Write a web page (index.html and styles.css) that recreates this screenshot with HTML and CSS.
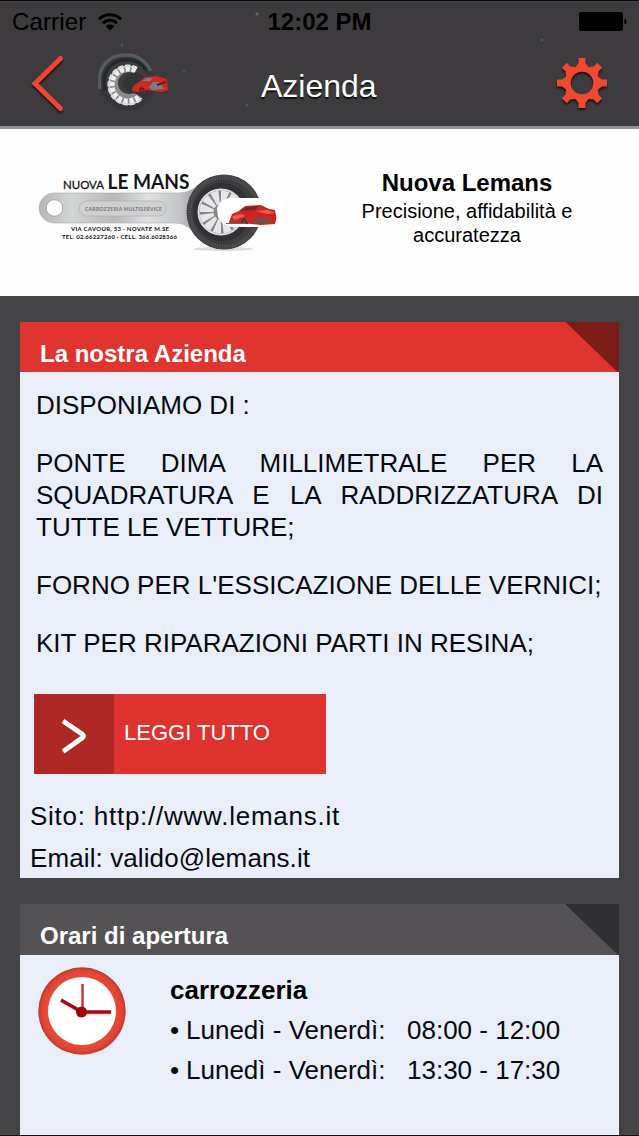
FILE: index.html
```html
<!DOCTYPE html>
<html lang="it">

<head>
  <meta charset="UTF-8">
  <meta name="viewport" content="width=device-width, initial-scale=1.0">
  <title>Azienda</title>
  <link rel="stylesheet" href="styles.css">
</head>

<body>
  <header>
    <div class="status">
      <span class="carrier">Carrier
        <svg width="26" height="20" viewBox="0 0 26 20" fill="none" stroke="#000" stroke-width="3">
          <path d="M2 7.2C8 1.3 18 1.3 24 7.2M6 11.3c4-4 10-4 14 0" />
          <path d="M8.5 14.2c2.700-2.400 6.300-2.400 9 0L13 18.500z" fill="#000" stroke="none" />
        </svg>
      </span>
      <b>12:02 PM</b>
      <svg class="battery" width="48" height="20" viewBox="0 0 48 20">
        <rect width="44" height="19" rx="2.500" />
        <path d="M45.500 6.500q2 .5 2 3t-2 3z" />
      </svg>
    </div>
    <nav>
      <svg class="back" width="36" height="60" viewBox="0 0 36 60" fill="none" stroke="#f2452f" stroke-width="5" stroke-linecap="round" stroke-linejoin="miter">
        <path d="M30.500 4.500 5 29.500l25.500 25" />
      </svg>
      <svg class="wheel" width="74" height="62" viewBox="0 0 74 62">
        <circle cx="29" cy="31" r="25" fill="none" stroke="#34373a" stroke-width="7" />
        <path d="M2 38C-2 15 12 3 29 4c12 0 19 7 24 16" fill="none" stroke="#555b5e" stroke-width="3.500" />
        <path d="M7 40C3 19 14 9 29 9c9 0 15 4 19 10" fill="none" stroke="#25282b" stroke-width="3" />
        <path d="M38 17.500A19 19 0 1 0 44 47l-6-6.500A11 11 0 1 1 37 23z" fill="#898b8d" />
        <path d="M38 19A17 17 0 1 0 42 46" fill="none" stroke="#efefef" stroke-width="7" stroke-dasharray="4.500 1.800" />
        <path d="M39 17.500A19 19 0 1 0 44 47" fill="none" stroke="#d4d5d5" stroke-width="1.500" />
        <path d="M29 24l9-3 8 5v22l-8-5-10-3-4-8z" fill="#343436" />
        <path d="M34 40l1-5 6-4 6-5 11-1 11 3 1 11-6 2-16-2-8 2z" fill="#cd2a24" />
        <path d="M44 30l5-3 6 0-3 3zM51 36l4-5 6 0 5 7-12 1z" fill="#777d89" />
        <path d="M42 40q1-5 4-1M59 34l9-3" stroke="#6d181a" stroke-width="2" fill="none" />
      </svg>
      <h1>Azienda</h1>
      <svg class="gear" width="52" height="52" viewBox="-26 -26 52 52" fill="#f0492f">
        <circle r="14.300" fill="none" stroke="#f0492f" stroke-width="6" />
        <g id="teeth">
          <path id="tooth" d="M-3.500-25h7v5l3 4h-13l3-4z" />
          <use href="#tooth" transform="rotate(45)" />
          <use href="#tooth" transform="rotate(90)" />
          <use href="#tooth" transform="rotate(135)" />
        </g>
        <use href="#teeth" transform="rotate(180)" />
      </svg>
    </nav>
  </header>

  <section class="intro">
    <svg class="logo" width="244" height="86" viewBox="38 168 244 86">
      <defs>
        <linearGradient id="steel">
          <stop offset="0" stop-color="#b5b6b8" />
          <stop offset=".2" stop-color="#d4d5d6" />
          <stop offset=".45" stop-color="#b5b7b9" />
          <stop offset=".65" stop-color="#dfe0e1" />
          <stop offset=".85" stop-color="#c2c3c5" />
          <stop offset="1" stop-color="#85878a" />
        </linearGradient>
      </defs>
      <ellipse cx="223" cy="249" rx="30" ry="2" fill="#ddd" />
      <path d="M54 193H178q12 0 20-8l8-3v58l-10-4q-8-13-20-13H54a14.500 14.500 0 0 1 0-30z" fill="url(#steel)" stroke="#b0b1b3" stroke-width=".7" />
      <circle cx="54.500" cy="208" r="8.300" fill="#fff" stroke="#999" stroke-width=".8" />
      <rect x="79" y="201" width="87" height="15" rx="7.500" fill="#cfd0d2" stroke="#aaa" stroke-width=".6" />
      <circle cx="224" cy="212" r="37.500" fill="#3c3d3f" />
      <circle cx="224" cy="212" r="34.500" fill="none" stroke="#515255" stroke-width="4" stroke-dasharray="1.500 1" />
      <circle cx="222" cy="212" r="29" fill="#303134" />
      <circle cx="221" cy="212" r="22.500" fill="#85878a" stroke="#dddddf" stroke-width="2" />
      <circle cx="221" cy="212" r="14.500" fill="none" stroke="#e6e6e8" stroke-width="14" stroke-dasharray="6 2" pathLength="96" />
      <path d="M221 201l8-3h53v29h-52l-8-4-4-6-1-9z" fill="#fff" />
      <path d="M229 222l3-8 7-3 6-5 16-1 8 4 6 1 1.500 8-1.500 6-14 1-20-2-12 1z" fill="#c9261f" />
      <path d="M239 211l8-4 12-1-4 4z" fill="#802326" />
      <path d="M232 216l9-2 5 2-12 4zM256 211l12-1 7 3-8 1z" fill="#ea6050" />
      <path d="M242 223q2-8 5 1" stroke="#35383c" stroke-width="2" fill="none" />
      <path d="M252 220l8-2 8 1 4 3-6 1h-14z" fill="#6b5157" />
      <path d="M226 223.500h20" stroke="#68696c" />
      <g class="logo-text">
        <text x="63" y="189.300" font-size="11.500" textLength="41" lengthAdjust="spacingAndGlyphs" class="light">NUOVA</text>
        <text x="107.500" y="189.300" font-size="21.500" font-weight="bold" textLength="82" lengthAdjust="spacingAndGlyphs">LE MANS</text>
        <text x="85" y="210.500" font-size="5" font-weight="bold" textLength="77" class="dim">CARROZZERIA MULTISERVICE</text>
        <text x="71" y="231.300" font-size="6" font-weight="bold" textLength="98">VIA CAVOUR, 53 · NOVATE M.SE</text>
        <text x="62" y="238.800" font-size="6" font-weight="bold" textLength="115">TEL. 02.66227260 · CELL. 366.6028366</text>
      </g>
    </svg>
    <div class="slogan">
      <h2>Nuova Lemans</h2>
      <p>Precisione, affidabilità e accuratezza</p>
    </div>
  </section>

  <main>
    <section class="card company">
      <h3>La nostra Azienda</h3>
      <div class="description">
        <p>DISPONIAMO DI :</p>
        <p class="justified">PONTE DIMA MILLIMETRALE PER LA SQUADRATURA E LA RADDRIZZATURA DI TUTTE LE VETTURE;</p>
        <p>FORNO PER L'ESSICAZIONE DELLE VERNICI;</p>
        <p>KIT PER RIPARAZIONI PARTI IN RESINA;</p>
      </div>
      <a class="more">
        <span class="more-icon">
          <svg width="26" height="38" viewBox="0 0 26 38" fill="none" stroke="#fff" stroke-width="5">
            <path d="M1 4 20 17q3 2 0 4L1 34.500" />
          </svg>
        </span>
        <span class="more-label">LEGGI TUTTO</span>
      </a>
      <p class="contact site">Sito: http://www.lemans.it</p>
      <p class="contact email">Email: valido@lemans.it</p>
    </section>

    <section class="card hours">
      <h3>Orari di apertura</h3>
      <div class="hours-body">
        <svg class="clock" width="88" height="88" viewBox="0 0 88 88">
          <defs>
            <radialGradient id="rim">
              <stop offset=".77" stop-color="#e94b39" />
              <stop offset=".92" stop-color="#df4434" />
              <stop offset="1" stop-color="#b93a30" />
            </radialGradient>
          </defs>
          <circle cx="44" cy="44" r="43.700" fill="url(#rim)" />
          <circle cx="44" cy="44" r="34" fill="#fff" />
          <path d="M44 47h29M24 35l19 11" stroke="#ddd" stroke-width="3" />
          <path d="M44.500 45V17" stroke="#cf3332" stroke-width="2.500" />
          <path d="M44 45h29M23 33l21 12" stroke="#a80710" stroke-width="3.500" />
          <circle cx="43.500" cy="45" r="5.500" fill="#a00008" />
        </svg>
        <div>
          <h4>carrozzeria</h4>
          <ul>
            <li><span>Lunedì - Venerdì:</span> <time>08:00 - 12:00</time></li>
            <li><span>Lunedì - Venerdì:</span> <time>13:30 - 17:30</time></li>
          </ul>
        </div>
      </div>
    </section>
  </main>
</body>

</html>
```
FILE: styles.css
```css
* {
  box-sizing: border-box;
  margin: 0;
  padding: 0;
}

body {
  height: 1136px;
  display: flex;
  flex-direction: column;
  overflow: hidden;
  font-family: "Liberation Sans", Arial, sans-serif;
  color: #050a10;
  background: #444345;
  border-bottom: 1px solid #111;
}

svg {
  display: block;
  flex: none;
}

header {
  height: 129px;
  background: #3d3b3e;
  background-image:
    radial-gradient(circle at 257px 13px, #66666a 1px, transparent 2px),
    radial-gradient(circle at 122px 44px, #626266 0, transparent 2px),
    radial-gradient(circle at 184px 70px, #58585c 0, transparent 2px),
    radial-gradient(circle at 542px 39px, #66666a 0, transparent 2px),
    radial-gradient(circle at 247px 104px, #66666a 0, transparent 2px);
  border-top: 1px solid #09090b;
  border-bottom: 3px solid #929193;
}

.status {
  height: 40px;
  display: grid;
  grid-template-columns: 1fr auto 1fr;
  align-items: center;
  padding: 2px 12px 0;
  font-size: 24px;
  color: #000;
}

.carrier {
  display: flex;
  align-items: center;
  gap: 11px;
  letter-spacing: .15px;
}

.battery {
  justify-self: end;
}

nav {
  height: 84px;
  display: flex;
  align-items: center;
  padding: 0 31px 0 30px;
}

.back {
  margin-top: 1px;
  filter: drop-shadow(0 2px 1px #111);
}

.wheel {
  margin: 0 0 2px 32px;
}

h1 {
  margin: 6px auto 0 89px;
  font-size: 32px;
  font-weight: normal;
  color: #fff;
  text-shadow: 0 2px 1px #111;
}

.gear {
  filter: drop-shadow(0 2px 1px #111);
}

.intro {
  height: 167px;
  display: flex;
  background: #fefdfe;
}

.logo {
  margin: 39px 0 0 38px;
}

.logo-text {
  font-family: Lato, "Liberation Sans", sans-serif;
  fill: #151517;
}

.logo-text .light {
  stroke: #151517;
  stroke-width: .3px;
}

.logo-text .dim {
  fill: #737477;
}

.slogan {
  width: 240px;
  margin: 39px 0 0 65px;
  text-align: center;
  color: #000;
}

.slogan h2 {
  font-size: 24px;
  line-height: 30px;
}

.slogan p {
  font-size: 20px;
  line-height: 24px;
  margin-top: 1px;
}

main {
  flex: 1;
  display: flex;
  flex-direction: column;
  gap: 26px;
  padding: 26px 20px 0;
}

.card {
  background: #eaeef8;
}

.card h3 {
  height: 50px;
  padding: 7px 20px 0;
  font-size: 24px;
  line-height: 50px;
  color: #fff;
}

.company {
  height: 556px;
}

.company h3 {
  background: linear-gradient(to bottom left, #7d1d1a 50%, #df342f 51%) right / 54px 52px no-repeat #df342f;
}

.description {
  padding: 17px 16px 0;
  font-size: 26px;
  line-height: 32px;
}

.description p {
  margin-bottom: 26px;
  white-space: nowrap;
}

.description .justified {
  text-align: justify;
  white-space: normal;
}

.more {
  display: flex;
  width: 292px;
  height: 80px;
  margin: 35px 0 0 14px;
  background: #df332f;
  color: #fff;
}

.more-icon {
  width: 80px;
  padding: 23px 0 0 28px;
  background: #ae2926;
}

.more-label {
  padding-left: 10px;
  font-size: 22px;
  line-height: 77px;
}

.contact {
  padding-left: 10px;
  font-size: 26px;
  line-height: 42px;
}

.site {
  margin-top: 21px;
  letter-spacing: .75px;
}

.email {
  letter-spacing: .1px;
}

.hours {
  flex: 1;
}

.hours h3 {
  height: 51px;
  background: linear-gradient(to bottom left, #302f32 50%, #545254 51%) right / 54px 52px no-repeat #545254;
}

.hours-body {
  display: flex;
  gap: 44px;
  padding: 12px 18px 0;
}

.hours h4 {
  margin-top: 4px;
  font-size: 26px;
  line-height: 39px;
  color: #000;
}

.hours li {
  display: flex;
  font-size: 26px;
  line-height: 40px;
}

.hours li::before {
  content: "•";
  width: 16px;
}

.hours li span {
  width: 221px;
}
```
